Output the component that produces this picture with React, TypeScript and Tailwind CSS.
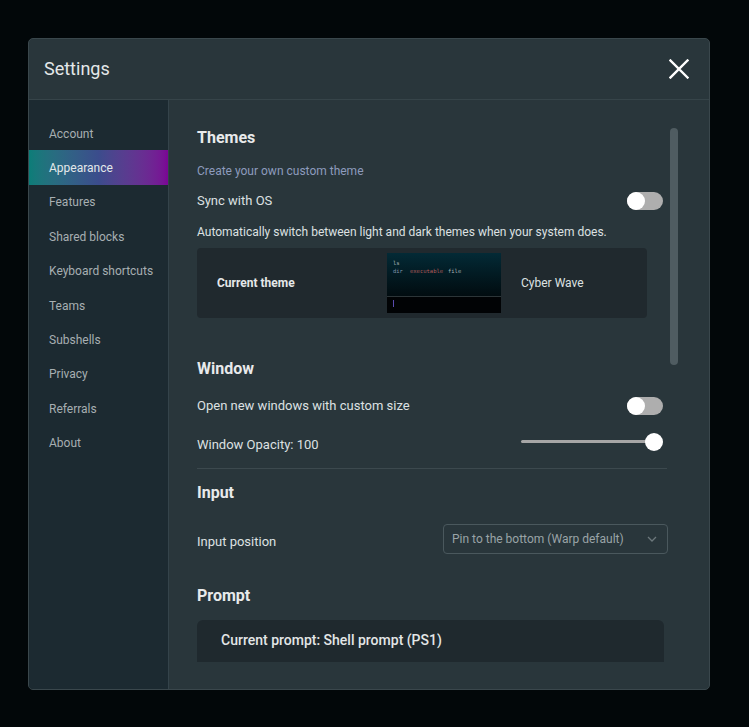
import React from "react";

const font = { fontFamily: "Roboto, 'Noto Sans', sans-serif" };

function Toggle() {
  return (
    <div className="relative w-[36px] h-[18px] rounded-full bg-[#aeaeae]">
      <div className="absolute left-0 top-0 w-[18px] h-[18px] rounded-full bg-white" />
    </div>
  );
}

const navItems = [
  "Account",
  "Appearance",
  "Features",
  "Shared blocks",
  "Keyboard shortcuts",
  "Teams",
  "Subshells",
  "Privacy",
  "Referrals",
  "About",
];

export default function App() {
  return (
    <div className="w-[749px] h-[727px] bg-[#020709] pt-[38px] pl-[28px]" style={font}>
      <div className="w-[682px] h-[652px] border border-[#3a474c] rounded-[5px] bg-[#29363b] flex flex-col overflow-hidden">
        {/* Header */}
        <div className="h-[61px] shrink-0 border-b border-[#364449] flex items-center justify-between pl-[15px] pr-[20px]">
          <span className="text-[18px] text-[#e4e8e9] leading-none">Settings</span>
          <svg width="20" height="20" viewBox="0 0 20 20">
            <path d="M1.5 1.5 L18.5 18.5 M18.5 1.5 L1.5 18.5" stroke="#ffffff" strokeWidth="2.4" strokeLinecap="square" />
          </svg>
        </div>
        {/* Body */}
        <div className="flex flex-1 min-h-0">
          {/* Sidebar */}
          <div className="w-[140px] shrink-0 bg-[#1c2a31] border-r border-[#34434a] pt-[16px] flex flex-col">
            {navItems.map((item) => {
              const active = item === "Appearance";
              return (
                <div
                  key={item}
                  className={
                    "h-[34.4px] flex items-center pl-[20px] pt-[1px] text-[12px] " +
                    (active
                      ? "bg-gradient-to-r from-[#0b7d78] via-[#3b4c8c] to-[#7a0495] text-[#e3e8ea]"
                      : "text-[#a7afb2]")
                  }
                >
                  {item}
                </div>
              );
            })}
          </div>
          {/* Content */}
          <div className="flex-1 flex flex-col">
            <div className="relative h-[562px] overflow-hidden pl-[28px] pt-[28px]">
              {/* scrollbar */}
              <div className="absolute left-[501px] top-[28px] w-[8px] h-[237px] rounded-full bg-[#4f5c61]" />
              <div className="w-[471px] flex flex-col">
                <div className="text-[16px] leading-[20px] font-bold text-[#e8eaeb]">Themes</div>
                <div className="mt-[15px] text-[12px] leading-[16px] text-[#8d9bbd]">Create your own custom theme</div>
                <div className="mt-[13px] h-[18px] flex items-center justify-between pr-[5px]">
                  <span className="text-[13px] text-[#dde1e2]">Sync with OS</span>
                  <Toggle />
                </div>
                <div className="mt-[14px] text-[12px] leading-[16px] text-[#dde1e2]">
                  Automatically switch between light and dark themes when your system does.
                </div>
                <div className="mt-[8px] w-[450px] h-[70px] rounded-[4px] bg-[#20292e] flex items-center">
                  <div className="w-[190px] pl-[20px] text-[12px] font-bold text-[#e5e8e9]">Current theme</div>
                  <div className="w-[114px] h-[60px] flex flex-col" style={{ fontFamily: "'DejaVu Sans Mono', monospace" }}>
                    <div className="h-[43px] bg-gradient-to-b from-[#032a36] to-[#010c10] pl-[6px] pt-[6px] text-[5.5px] leading-[8px]">
                      <div className="text-[#a8b2b4]">ls</div>
                      <div className="flex">
                        <span className="text-[#7f93a8] w-[17px]">dir</span>
                        <span className="text-[#b05a5a] w-[38px]">executable</span>
                        <span className="text-[#a8b2b4]">file</span>
                      </div>
                    </div>
                    <div className="h-[1px] bg-[#2c3538]" />
                    <div className="flex-1 bg-[#010305] pl-[6px] pt-[3px]">
                      <div className="w-[1px] h-[7px] bg-[#5a4bb0]" />
                    </div>
                  </div>
                  <div className="ml-[20px] text-[12px] text-[#dde1e2]">Cyber Wave</div>
                </div>

                <div className="mt-[41px] text-[16px] leading-[20px] font-bold text-[#e8eaeb]">Window</div>
                <div className="mt-[18px] h-[18px] flex items-center justify-between pr-[5px]">
                  <span className="text-[13px] text-[#dde1e2]">Open new windows with custom size</span>
                  <Toggle />
                </div>
                <div className="mt-[18px] h-[18px] flex items-center justify-between pr-[5px]">
                  <span className="text-[13px] text-[#dde1e2] mt-[5px]">Window Opacity: 100</span>
                  <div className="relative w-[142px] h-[18px]">
                    <div className="absolute left-0 right-[6px] top-[7px] h-[3px] rounded-full bg-[#a6a6a6]" />
                    <div className="absolute right-0 top-0 w-[18px] h-[18px] rounded-full bg-white" />
                  </div>
                </div>
                <div className="mt-[17px] h-[1px] w-[470px] bg-[#3c494e]" />

                <div className="mt-[14px] text-[16px] leading-[20px] font-bold text-[#e8eaeb]">Input</div>
                <div className="mt-[21px] h-[30px] flex items-center justify-between">
                  <span className="text-[13px] text-[#dde1e2] mt-[6px]">Input position</span>
                  <div className="w-[225px] h-[30px] border border-[#4a585d] rounded-[4px] flex items-center justify-between pl-[8px] pr-[10px]">
                    <span className="text-[12px] text-[#9aa4a7] -mt-[1px]">Pin to the bottom (Warp default)</span>
                    <svg width="10" height="6" viewBox="0 0 10 6">
                      <path d="M1 1 L5 5 L9 1" fill="none" stroke="#6c787c" strokeWidth="1.3" />
                    </svg>
                  </div>
                </div>

                <div className="mt-[32px] text-[16px] leading-[20px] font-bold text-[#e8eaeb]">Prompt</div>
                <div className="mt-[14px] w-[467px] h-[80px] rounded-[6px] bg-[#1f292e] pl-[24px] pt-[10px]">
                  <div className="text-[14px] leading-[20px] font-medium text-[#e3e6e7]">Current prompt: Shell prompt (PS1)</div>
                </div>
              </div>
            </div>
          </div>
        </div>
      </div>
    </div>
  );
}
